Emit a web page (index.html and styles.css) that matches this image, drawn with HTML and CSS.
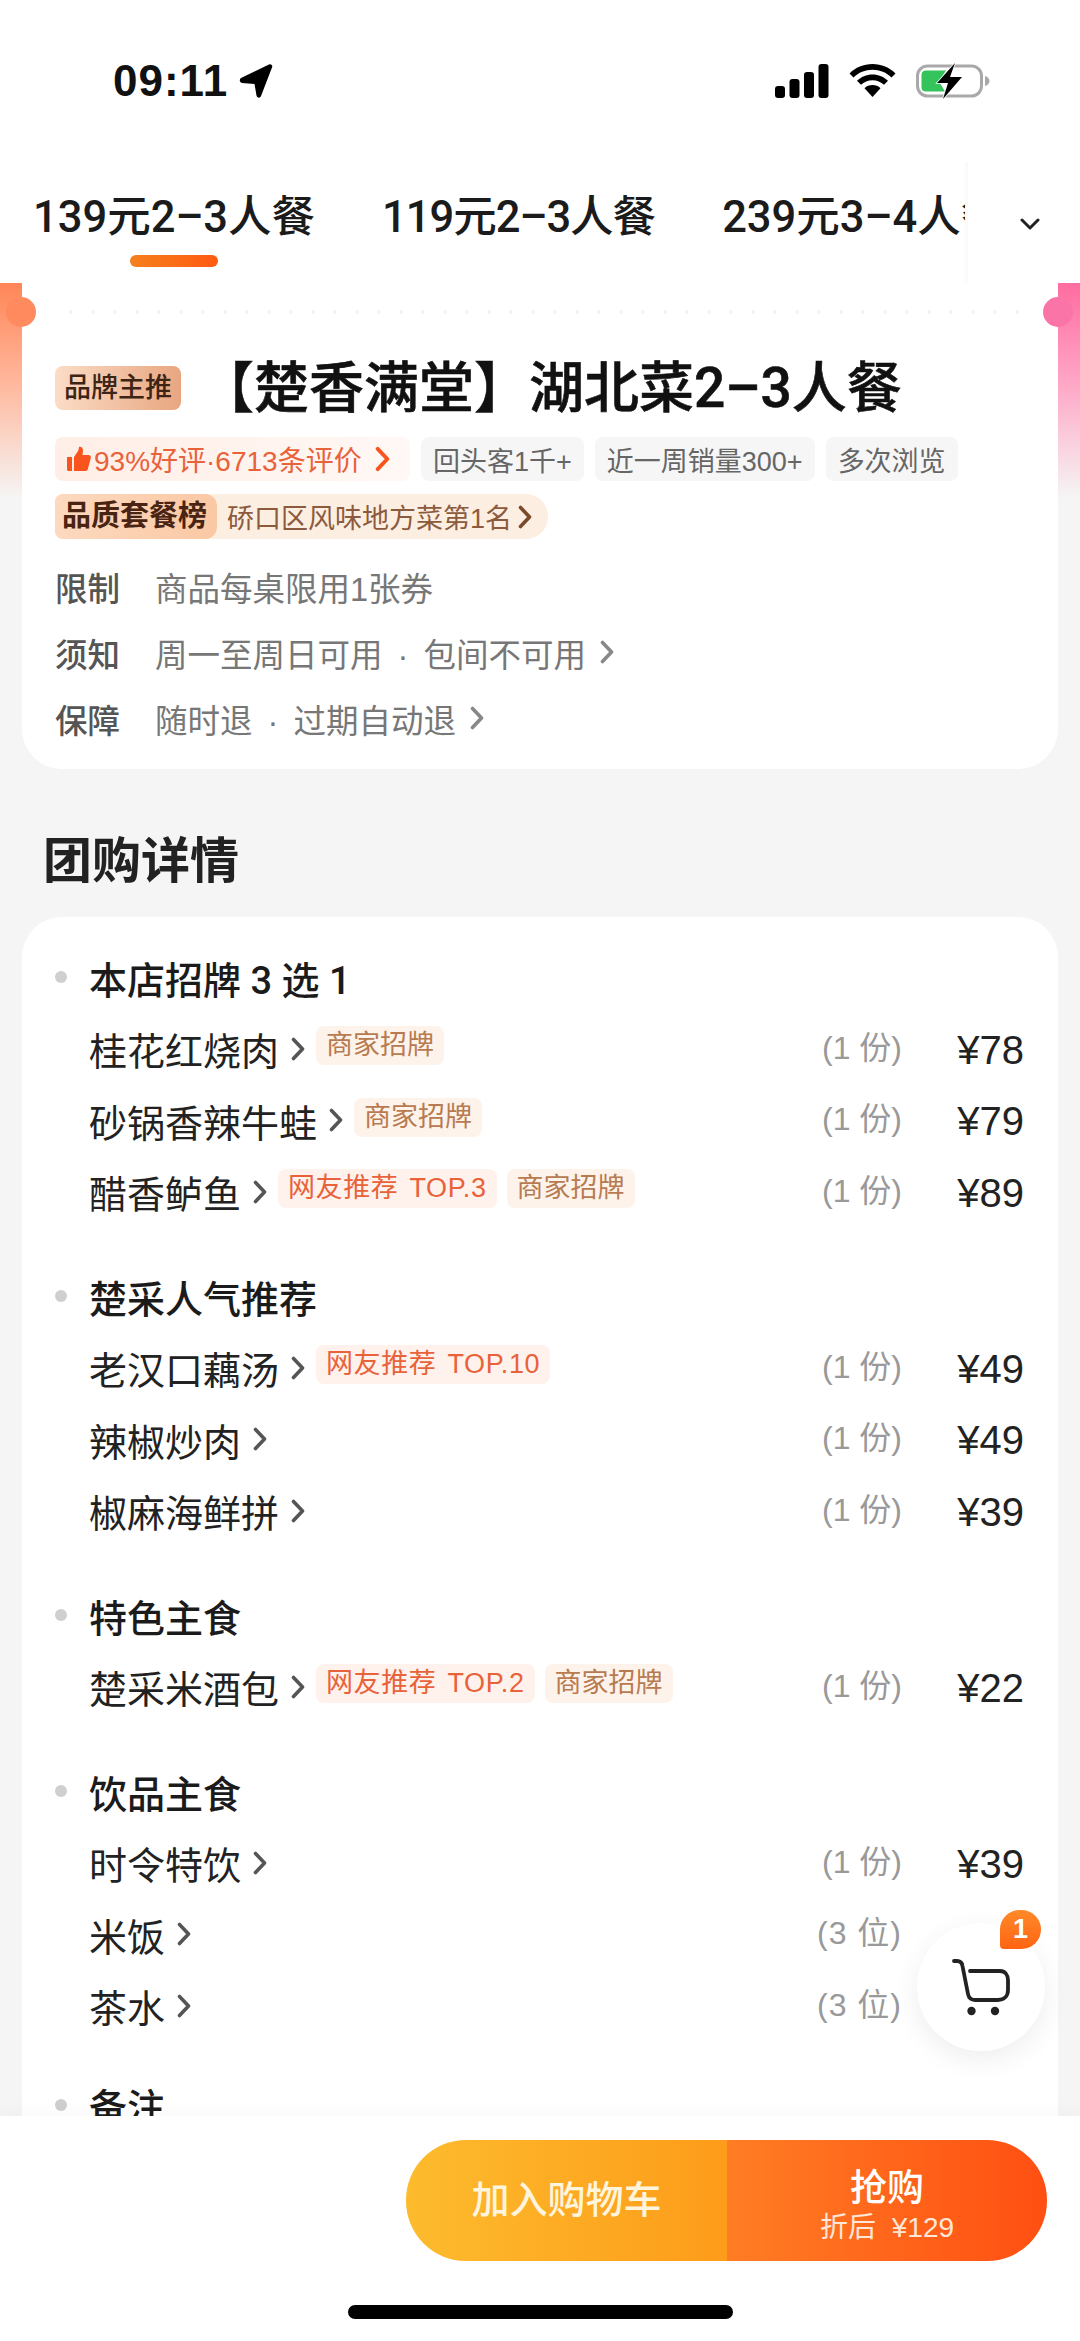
FILE: index.html
```html
<!DOCTYPE html>
<html lang="zh-CN">
<head>
  <meta charset="UTF-8" />
  <meta name="viewport" content="width=device-width, initial-scale=1.0" />
  <title>团购详情</title>
  <link rel="stylesheet" href="styles.css">
</head>
<body>
  <svg class="sprites" width="0" height="0">
    <symbol id="chev" viewBox="0 0 14 24">
      <path d="M2.500 2.500l9 9.500-9 9.500" fill="none" stroke="currentColor" stroke-width="3.600" stroke-linecap="round" stroke-linejoin="round"/>
    </symbol>
  </svg>

  <div class="page">
    <!-- Status bar and tabs -->
    <header class="top">
      <div class="statusbar">
        <div class="clock">
          <span>09:11</span>
          <svg width="36" height="36" viewBox="0 0 36 36"><path d="M3 15L31 1.500c2-1 4 1 3 3L23 33c-1 2.500-4 2-4.500-.5L16.500 21 4 20C1.500 19.500 1 16.500 3 15z" fill="#000"/></svg>
        </div>
        <div class="status-icons">
          <svg width="54" height="34" viewBox="0 0 54 34"><rect x="0" y="22" width="10" height="12" rx="3"/><rect x="14.500" y="15" width="10" height="19" rx="3"/><rect x="29" y="8" width="10" height="26" rx="3"/><rect x="43.500" y="0" width="10" height="34" rx="3"/></svg>
          <svg width="47" height="34" viewBox="0 0 46 34"><path d="M23 0c9 0 17 3.500 23 9.500l-4 4C37 8.600 30.300 5.800 23 5.800S9 8.600 4 13.500l-4-4C6 3.500 14 0 23 0z"/><path d="M23 10.500c6 0 11.500 2.400 15.500 6.300l-4 4c-3-2.900-7-4.600-11.500-4.600s-8.500 1.700-11.500 4.600l-4-4c4-3.900 9.500-6.300 15.500-6.300z"/><path d="M23 21c3.200 0 6 1.200 8 3.200L23 33l-8-8.800c2-2 4.800-3.200 8-3.200z"/></svg>
          <svg width="74" height="36" viewBox="0 0 74 36">
            <rect x="1.500" y="3" width="64" height="30" rx="10" fill="none" stroke="#a9a9a9" stroke-width="3"/>
            <path d="M69 13c3 .8 4.500 2.800 4.500 5S72 22.200 69 23z" fill="#a9a9a9"/>
            <path d="M10 7.500h20l-7 11 6 10H10c-3 0-4.500-1.500-4.500-4V12c0-3 1.500-4.500 4.500-4.500z" fill="#35c35c"/>
            <path d="M39 0L21 20h11l-5 16 19-22H34z" fill="#000" stroke="#fff" stroke-width="1.500" paint-order="stroke"/>
          </svg>
        </div>
      </div>
      <div class="tabbar">
        <div class="tabs">
          <div class="tab tab-active">139元2–3人餐<i class="tab-line"></i></div>
          <div class="tab tab-narrow">119元2–3人餐</div>
          <div class="tab">239元3–4人餐</div>
        </div>
        <div class="tab-more">
          <svg width="20" height="12" viewBox="0 0 20 12"><path d="M2 2l8 8 8-8" fill="none" stroke="#222" stroke-width="3" stroke-linecap="round" stroke-linejoin="round"/></svg>
        </div>
      </div>
    </header>

    <main class="main">
      <!-- Deal summary -->
      <section class="deal">
        <i class="bump bump-left"></i>
        <i class="bump bump-right"></i>
        <div class="deal-card">
          <div class="dots"></div>
          <div class="deal-head">
            <span class="brand-badge">品牌主推</span>
            <h1 class="deal-title">【楚香满堂】湖北菜2–3人餐</h1>
          </div>
          <div class="chips">
            <span class="chip chip-rate">
              <svg width="24" height="26" viewBox="0 0 24 26"><path d="M0 11h5v14H1.500C.6 25 0 24.400 0 23.500z" fill="#f9541e"/><path d="M7 11l4-6c.8-1.500 1-3 1-4.200 2.500-.6 4.200 1.300 4 4L15.500 9h6c1.700 0 2.800 1.500 2.300 3l-3 11.200c-.4 1.200-1.300 1.800-2.500 1.800H7z" fill="#f9541e"/></svg>
              <span>93%好评·6713条评价</span>
              <svg class="chev chev-rate"><use href="#chev"/></svg>
            </span>
            <span class="chip">回头客1千+</span>
            <span class="chip">近一周销量300+</span>
            <span class="chip">多次浏览</span>
          </div>
          <div class="rank">
            <span class="rank-name">品质套餐榜</span>
            <span class="rank-text">硚口区风味地方菜第1名</span>
            <svg class="chev chev-rank"><use href="#chev"/></svg>
          </div>
          <div class="facts">
            <div class="fact"><b>限制</b><span>商品每桌限用1张券</span></div>
            <div class="fact"><b>须知</b><span>周一至周日可用 · 包间不可用</span><svg class="chev chev-fact"><use href="#chev"/></svg></div>
            <div class="fact"><b>保障</b><span>随时退 · 过期自动退</span><svg class="chev chev-fact"><use href="#chev"/></svg></div>
          </div>
        </div>
      </section>

      <h2 class="detail-title">团购详情</h2>

      <!-- Menu -->
      <section class="detail-card">
        <div class="group">
          <div class="group-head"><i></i>本店招牌 3 选 1</div>
          <div class="item">
            <span class="name">桂花红烧肉</span><svg class="chev"><use href="#chev"/></svg>
            <span class="tag">商家招牌</span>
            <span class="count">(1 份)</span><span class="price">¥78</span>
          </div>
          <div class="item">
            <span class="name">砂锅香辣牛蛙</span><svg class="chev"><use href="#chev"/></svg>
            <span class="tag">商家招牌</span>
            <span class="count">(1 份)</span><span class="price">¥79</span>
          </div>
          <div class="item">
            <span class="name">醋香鲈鱼</span><svg class="chev"><use href="#chev"/></svg>
            <span class="tag tag-red">网友推荐 TOP.3</span><span class="tag">商家招牌</span>
            <span class="count">(1 份)</span><span class="price">¥89</span>
          </div>
        </div>

        <div class="group">
          <div class="group-head"><i></i>楚采人气推荐</div>
          <div class="item">
            <span class="name">老汉口藕汤</span><svg class="chev"><use href="#chev"/></svg>
            <span class="tag tag-red">网友推荐 TOP.10</span>
            <span class="count">(1 份)</span><span class="price">¥49</span>
          </div>
          <div class="item">
            <span class="name">辣椒炒肉</span><svg class="chev"><use href="#chev"/></svg>
            <span class="count">(1 份)</span><span class="price">¥49</span>
          </div>
          <div class="item">
            <span class="name">椒麻海鲜拼</span><svg class="chev"><use href="#chev"/></svg>
            <span class="count">(1 份)</span><span class="price">¥39</span>
          </div>
        </div>

        <div class="group">
          <div class="group-head"><i></i>特色主食</div>
          <div class="item">
            <span class="name">楚采米酒包</span><svg class="chev"><use href="#chev"/></svg>
            <span class="tag tag-red">网友推荐 TOP.2</span><span class="tag">商家招牌</span>
            <span class="count">(1 份)</span><span class="price">¥22</span>
          </div>
        </div>

        <div class="group">
          <div class="group-head"><i></i>饮品主食</div>
          <div class="item">
            <span class="name">时令特饮</span><svg class="chev"><use href="#chev"/></svg>
            <span class="count">(1 份)</span><span class="price">¥39</span>
          </div>
          <div class="item">
            <span class="name">米饭</span><svg class="chev"><use href="#chev"/></svg>
            <span class="count count-seat">(3 位)</span><span class="price"></span>
          </div>
          <div class="item">
            <span class="name">茶水</span><svg class="chev"><use href="#chev"/></svg>
            <span class="count count-seat">(3 位)</span><span class="price"></span>
          </div>
        </div>

        <div class="group group-note">
          <div class="group-head"><i></i>备注</div>
        </div>
      </section>

      <!-- Floating cart -->
      <div class="cart">
        <svg width="64" height="64" viewBox="0 0 64 64">
          <path d="M5 6h3c3 0 5 1.500 5.500 5L19 39c.8 4 3.500 6 7 6h23c6 0 10-4 10-10V25c0-5-3-9-8-9H21" fill="none" stroke="#222" stroke-width="3.800" stroke-linecap="round"/>
          <circle cx="22.500" cy="56" r="4.200" fill="#222"/>
          <circle cx="46" cy="56" r="4.200" fill="#222"/>
        </svg>
        <span class="cart-badge">1</span>
      </div>
    </main>

    <footer class="footer">
      <div class="actions">
        <div class="btn-cart">加入购物车</div>
        <div class="btn-buy">
          <div class="btn-buy-main">抢购</div>
          <div class="btn-buy-sub">折后 ¥129</div>
        </div>
      </div>
      <div class="home-bar"></div>
    </footer>
  </div>
</body>
</html>
```

FILE: styles.css
```css
* {
  box-sizing: border-box;
}
html, body {
  margin: 0;
  height: 100%;
}
body {
  background: #f5f5f5;
  color: #222;
  font-family: "Liberation Sans", "Noto Sans CJK SC", sans-serif;
  overflow: hidden;
}
.sprites {
  position: absolute;
}
.page {
  height: 2341px;
  display: flex;
  flex-direction: column;
}

/* Top */
.top {
  background: #fff;
  flex: none;
}
.statusbar {
  height: 162px;
  display: flex;
  align-items: center;
  justify-content: space-between;
  padding: 0 90px 0 113px;
}
.clock {
  display: flex;
  align-items: center;
  gap: 10px;
  font-size: 44px;
  font-weight: 700;
  letter-spacing: 1px;
  color: #111;
}
.status-icons {
  display: flex;
  align-items: center;
  gap: 20px;
}
.tabbar {
  height: 121px;
  display: flex;
}
.tabs {
  width: 968px;
  flex: none;
  display: flex;
  gap: 67px;
  padding: 28px 0 0 33px;
  overflow: hidden;
  border-right: 3px solid #fafafa;
}
.tab {
  flex: none;
  font-family: Roboto, "Noto Sans CJK SC", sans-serif;
  font-size: 43.5px;
  line-height: 56px;
  font-weight: 500;
  color: #1b1b1b;
  display: flex;
  flex-direction: column;
  align-items: center;
}
.tab-narrow {
  letter-spacing: -1px;
}
.tab-line {
  display: block;
  width: 88px;
  height: 12px;
  margin-top: 9px;
  border-radius: 6px;
  background: linear-gradient(90deg, #f5801e, #ff5a12);
}
.tab-more {
  flex: 1;
  display: flex;
  justify-content: center;
  padding: 56px 0 0 12px;
}

/* Main */
.main {
  position: relative;
  flex: 1;
  overflow: hidden;
  min-height: 0;
}
.deal {
  position: relative;
  padding: 0 22px;
  background:
    linear-gradient(180deg, #ff8658, #ffb69a 45%, #f5f5f5 100%) left top / 22px 215px no-repeat,
    linear-gradient(180deg, #ff6ca0, #ffa4c4 45%, #f5f5f5 100%) right top / 22px 215px no-repeat;
}
.bump {
  position: absolute;
  z-index: 1;
  top: 14px;
  width: 30px;
  height: 30px;
  border-radius: 50%;
}
.bump-left {
  left: 6px;
  background: #ff8a5e;
}
.bump-right {
  right: 7px;
  background: #fb74a8;
}
.deal-card {
  position: relative;
  background: #fff;
  border-radius: 0 0 40px 40px;
  padding: 27px 33px 18px;
}
.dots {
  height: 4px;
  margin: 0 5px;
  background: radial-gradient(circle, #f6f3f3 1.6px, transparent 2px) left center / 22px 4px repeat-x;
}
.deal-head {
  display: flex;
  align-items: center;
  height: 60px;
  margin-top: 44px;
}
.brand-badge {
  flex: none;
  width: 126px;
  height: 44px;
  border-radius: 8px;
  background: linear-gradient(90deg, #fbdcc6, #e8a680);
  color: #3d2415;
  font-size: 27px;
  font-weight: 500;
  line-height: 44px;
  text-align: center;
}
.deal-title {
  margin: 0 0 0 18px;
  font-family: Roboto, "Noto Sans CJK SC", sans-serif;
  font-size: 55px;
  line-height: 60px;
  font-weight: 500;
  color: #111;
  -webkit-text-stroke: 0.6px #111;
  white-space: nowrap;
}
.chips {
  display: flex;
  gap: 11px;
  margin-top: 19px;
}
.chip {
  height: 44px;
  display: flex;
  align-items: center;
  padding: 0 12px;
  border-radius: 8px;
  background: #f6f6f6;
  color: #666;
  font-size: 27px;
  white-space: nowrap;
}
.chip-rate {
  width: 355px;
  gap: 3px;
  font-size: 28px;
  background: linear-gradient(90deg, #ffeee6, #fff8f5);
  color: #e8623a;
}
.chev {
  width: 14px;
  height: 24px;
  margin-left: 12px;
  flex: none;
  color: #555;
}
.chev-rate {
  width: 15px;
  height: 26px;
  margin-left: 10px;
  color: #f9541e;
}
.rank {
  width: 493px;
  height: 45px;
  display: flex;
  align-items: center;
  margin-top: 13px;
  border-radius: 8px 22px 22px 8px;
  background: #fdeee2;
  font-size: 27px;
  overflow: hidden;
}
.rank-name {
  height: 100%;
  width: 162px;
  flex: none;
  padding-left: 7px;
  font-size: 29px;
  line-height: 45px;
  font-weight: 700;
  color: #4a2412;
  background: linear-gradient(90deg, #fcd9bf, #fbc8a4);
  border-radius: 0 12px 12px 0;
  white-space: nowrap;
}
.rank-text {
  margin-left: 10px;
  color: #8c5a3c;
  white-space: nowrap;
}
.chev-rank {
  margin-left: 6px;
  color: #7a4a2c;
}
.facts {
  margin-top: 14px;
}
.fact {
  height: 66px;
  display: flex;
  align-items: center;
  font-size: 32.5px;
  color: #777;
}
.fact span {
  word-spacing: 6px;
}
.fact b {
  width: 100px;
  flex: none;
  font-weight: 500;
  color: #555;
}
.chev-fact {
  margin-left: 14px;
  color: #888;
}

.detail-title {
  margin: 58px 0 22px 43px;
  font-size: 49px;
  line-height: 68px;
  font-weight: 700;
  color: #222;
}
.detail-card {
  margin: 0 22px;
  padding: 24px 34px 0 33px;
  background: #fff;
  border-radius: 40px 40px 0 0;
}
.group + .group {
  margin-top: 32.5px;
}
.group-note {
  margin-top: 27px !important;
}
.group-head {
  height: 72px;
  display: flex;
  align-items: center;
  gap: 22px;
  font-family: Roboto, "Noto Sans CJK SC", sans-serif;
  font-size: 38px;
  font-weight: 500;
  color: #1b1b1b;
}
.group-head i {
  width: 12px;
  height: 12px;
  border-radius: 50%;
  background: #cfcfcf;
}
.item {
  height: 71.5px;
  display: flex;
  align-items: center;
  padding-left: 34px;
  white-space: nowrap;
}
.name {
  font-size: 38px;
  color: #222;
}
.tag {
  height: 39px;
  margin: 0 0 6px 10px;
  padding: 0 10px;
  border-radius: 8px;
  background: #fdf3ea;
  color: #b87a50;
  font-size: 27px;
  line-height: 39px;
}
.chev + .tag {
  margin-left: 11px;
}
.tag-red {
  background: #fff2ec;
  color: #e8623a;
  word-spacing: 3px;
  letter-spacing: 0.6px;
}
.count {
  margin: 0 0 8px auto;
  font-size: 32px;
  color: #999;
}
.count-seat {
  letter-spacing: 1px;
}
.price {
  width: 122px;
  flex: none;
  margin-top: 3px;
  text-align: right;
  font-size: 40px;
  color: #222;
}

/* Floating cart */
.cart {
  position: absolute;
  right: 35px;
  bottom: 65px;
  width: 128px;
  height: 128px;
  border-radius: 50%;
  background: #fff;
  box-shadow: 0 8px 28px rgba(0, 0, 0, 0.07);
  display: flex;
  align-items: center;
  justify-content: center;
}
.cart-badge {
  position: absolute;
  top: -13px;
  right: 4px;
  width: 41px;
  height: 39px;
  border-radius: 20px 20px 20px 4px;
  background: linear-gradient(180deg, #ff8a2a, #ff6412);
  color: #fff;
  font-size: 27px;
  font-weight: 700;
  line-height: 39px;
  text-align: center;
}

/* Footer */
.footer {
  position: relative;
  flex: none;
  height: 225px;
  background: #fff;
  padding-top: 24px;
  box-shadow: 0 -6px 14px rgba(0, 0, 0, 0.025);
}
.actions {
  display: flex;
  width: 641px;
  height: 121px;
  margin: 0 33px 0 auto;
  border-radius: 60px;
  overflow: hidden;
  color: #fff;
}
.btn-cart {
  width: 321px;
  flex: none;
  background: linear-gradient(90deg, #fdbb2d, #fd9c1a);
  color: #fff4dc;
  font-size: 38px;
  font-weight: 500;
  line-height: 121px;
  text-align: center;
}
.btn-buy {
  flex: 1;
  background: linear-gradient(90deg, #ff7d24, #ff4f12);
  text-align: center;
}
.btn-buy-main {
  margin-top: 27px;
  font-size: 37px;
  line-height: 44px;
  font-weight: 500;
}
.btn-buy-sub {
  margin-top: 0;
  font-size: 28px;
  line-height: 34px;
  word-spacing: 8px;
  color: #ffe6d6;
}
.home-bar {
  width: 385px;
  height: 14px;
  margin: 44px auto 0;
  border-radius: 7px;
  background: #000;
}
```
